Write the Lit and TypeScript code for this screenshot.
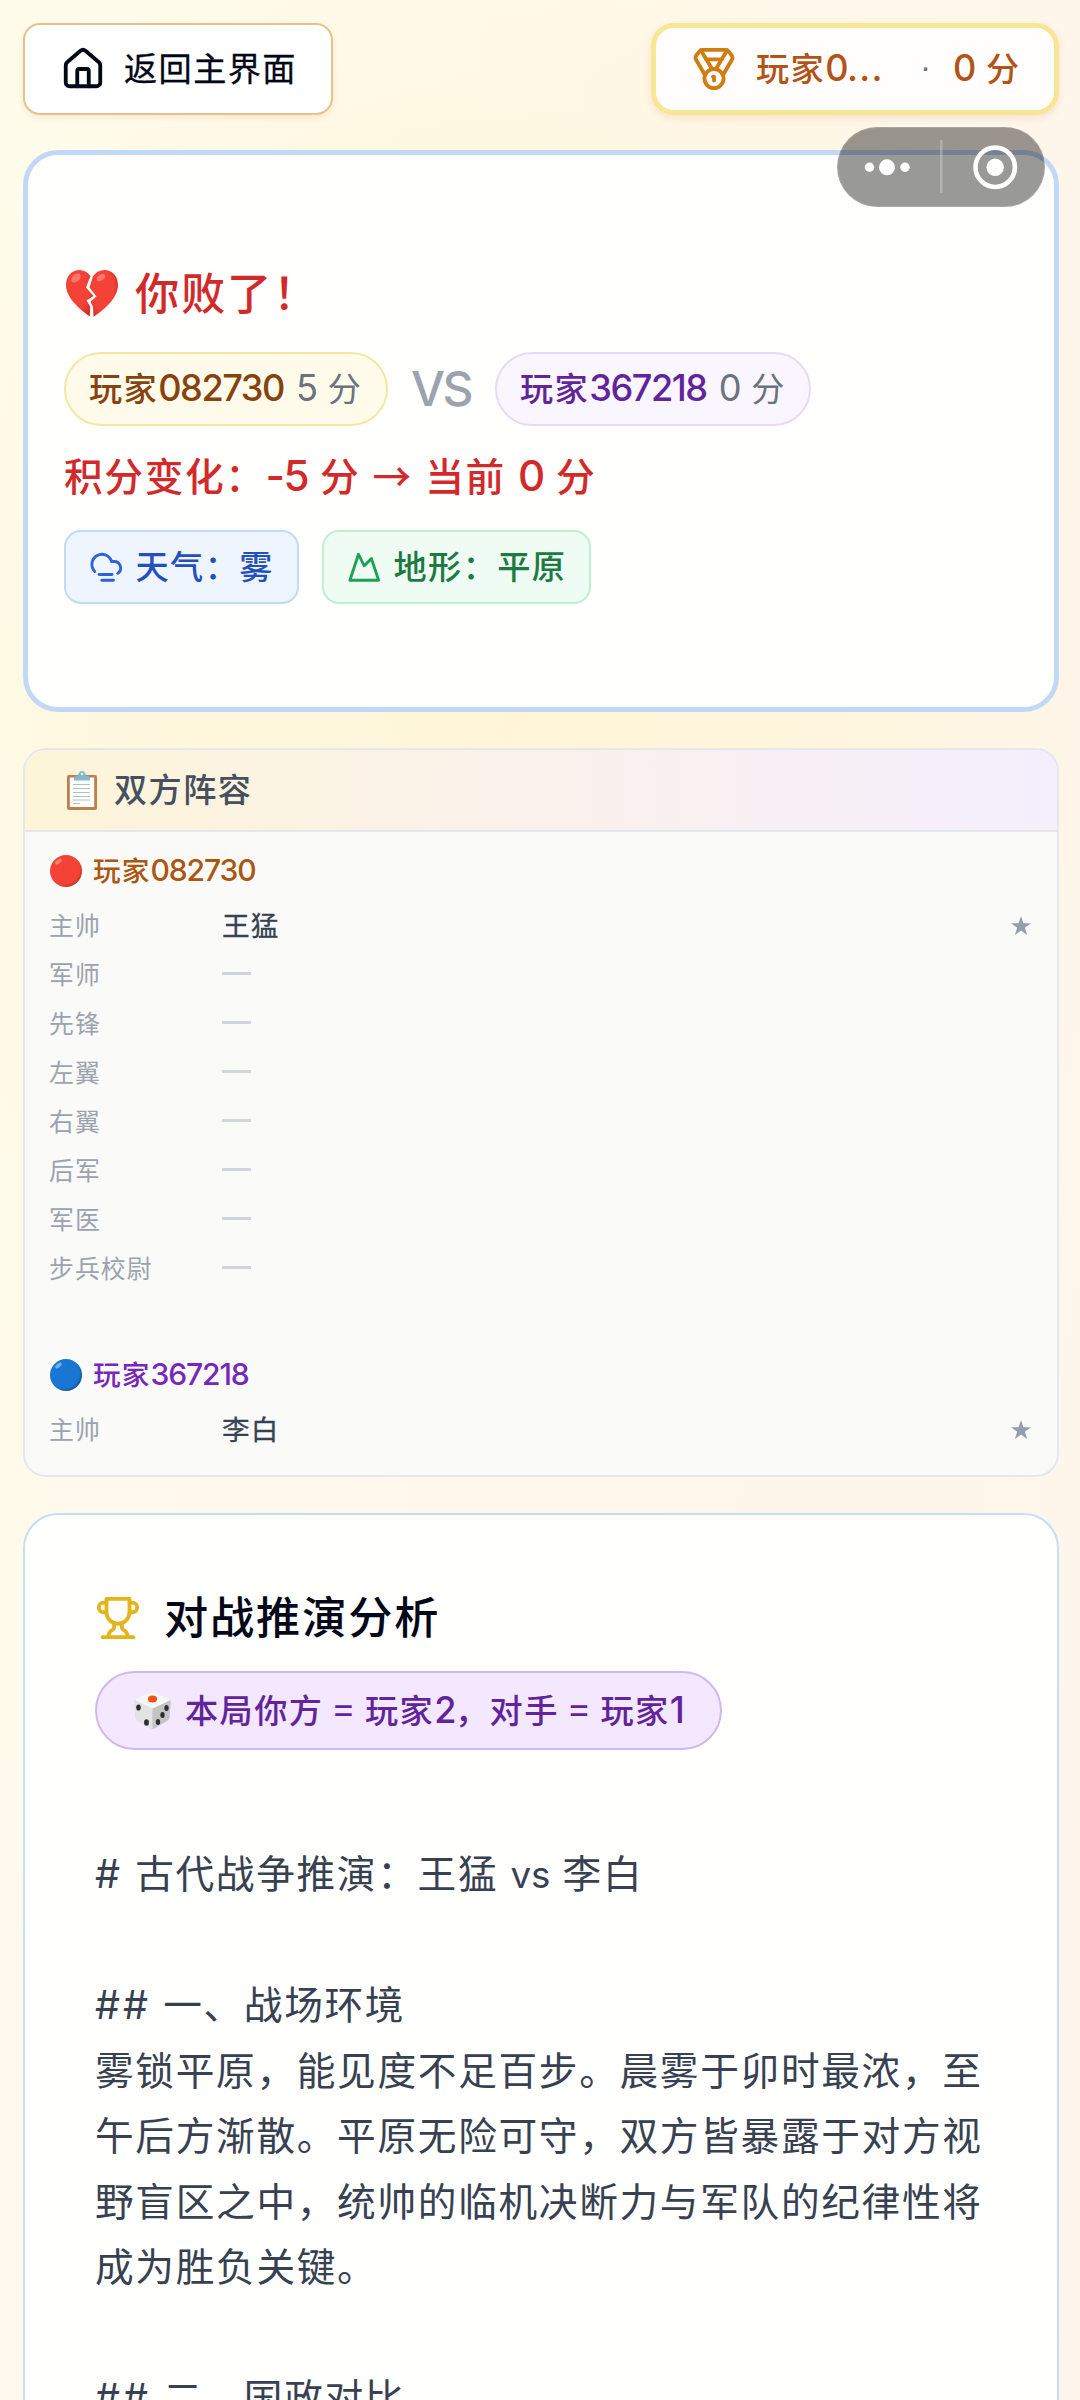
import { LitElement, html, css, svg } from "lit";
import { customElement } from "lit/decorators.js";

const slots = ["主帅", "军师", "先锋", "左翼", "右翼", "后军", "军医", "步兵校尉"];

const lucide = (cls: string, body: unknown) => html`<svg class=${cls} viewBox="0 0 24 24" fill="none"
  stroke="currentColor" stroke-width="2" stroke-linecap="round" stroke-linejoin="round">${body}</svg>`;

const house = svg`<path d="M15 21v-8a1 1 0 0 0-1-1h-4a1 1 0 0 0-1 1v8"/><path d="M3 10a2 2 0 0 1 .709-1.528l7-6a2 2 0 0 1 2.582 0l7 6A2 2 0 0 1 21 10v9a2 2 0 0 1-2 2H5a2 2 0 0 1-2-2z"/>`;
const medal = svg`<path d="M7.21 15 2.66 7.14a2 2 0 0 1 .13-2.2L4.4 2.8A2 2 0 0 1 6 2h12a2 2 0 0 1 1.6.8l1.6 2.14a2 2 0 0 1 .14 2.2L16.79 15"/><path d="M11 12 5.12 2.2"/><path d="m13 12 5.88-9.8"/><path d="M8 7h8"/><circle cx="12" cy="17" r="5"/><path d="M12 18v-2h-.5"/>`;
const cloudFog = svg`<path d="M4 14.899A7 7 0 1 1 15.71 8h1.79a4.5 4.5 0 0 1 2.5 8.242"/><path d="M16 17H7"/><path d="M17 21H9"/>`;
const mountain = svg`<path d="m8 3 4 8 5-5 5 15H2L8 3z"/>`;
const trophy = svg`<path d="M6 9H4.5a2.5 2.5 0 0 1 0-5H6"/><path d="M18 9h1.5a2.5 2.5 0 0 0 0-5H18"/><path d="M4 22h16"/><path d="M10 14.66V17c0 .55-.47.98-.97 1.21C7.85 18.75 7 20.24 7 22"/><path d="M14 14.66V17c0 .55.47.98.97 1.21C16.15 18.75 17 20.24 17 22"/><path d="M18 2H6v7a6 6 0 0 0 12 0V2Z"/>`;

const brokenHeart = html`<svg class="heart" viewBox="0 0 52 47">
  <defs><radialGradient id="hg" cx=".42" cy=".4" r=".7"><stop offset=".6" stop-color="#f44336"/><stop offset="1" stop-color="#c62828"/></radialGradient></defs>
  <path fill="url(#hg)" d="M24.5 6C21.5 2 17.500 0 13.500 0C5.500 0 0 6.500 0 15C0 28 13.500 39 23.800 46.500L24.200 36.500L20.500 30.500L27.500 26L20 17.500Z"/>
  <path fill="url(#hg)" d="M27 6C30 2 34 0 38.500 0C46.500 0 52 6.500 52 15C52 28 38 40 27.500 46.800L27 37L24.500 31.500L30.500 26.500L23.500 17.500Z"/>
  <ellipse cx="10" cy="8" rx="5.500" ry="3.600" fill="#ff8a80" opacity=".75" transform="rotate(-38 10 8)"/>
  <ellipse cx="35" cy="7.500" rx="5" ry="3" fill="#ff8a80" opacity=".75" transform="rotate(-35 35 7.500)"/>
</svg>`;
const clipboard = html`<svg class="clip" viewBox="0 0 30 39">
  <rect x="0" y="4" width="30" height="35" rx="2" fill="#bd7f4c"/><rect x="2.800" y="6.500" width="24.400" height="29.500" fill="#fff"/>
  <path d="M7 9.500V7.500C7 5.500 8.500 5 11 4.500C11.500 1.500 13 0 15 0S18.500 1.500 19 4.500C21.500 5 23 5.500 23 7.500V9.500Z" fill="#82b8c8"/><circle cx="15" cy="3" r="1.200" fill="#fbf2d8"/>
  <g stroke="#b5bfc9" stroke-width="1"><path d="M6 13.500H23"/><path d="M6 17.500H23"/><path d="M6 21.500H23"/><path d="M6 25.500H23"/><path d="M6 29H23"/><path d="M6 32.500H13"/></g>
</svg>`;
const orb = (id: string, main: string, edge: string, shine: string) => html`<svg class="orb" viewBox="0 0 32 32">
  <defs><radialGradient id=${id} cx=".44" cy=".44" r=".57"><stop offset=".84" stop-color=${main}/><stop offset="1" stop-color=${edge}/></radialGradient></defs>
  <circle cx="16" cy="16" r="16" fill="url(#${id})"/><ellipse cx="8.500" cy="6.500" rx="4" ry="1.900" transform="rotate(-40 8.500 6.500)" fill=${shine}/></svg>`;
const dice = html`<svg class="dice" viewBox="0 0 37 37">
  <path d="M18 0Q20 0 22 1L34 6Q37 7.500 36.600 10L35.500 25Q35.300 27.500 33 29L21 36Q18.500 37.400 16 36L4 29Q1.700 27.500 1.500 25L.3 10Q0 7.500 3 6L15 1Q16.500 0 18 0Z" fill="#d9d9d9"/>
  <path d="M18 0Q20 0 22 1L34 6Q37 7.500 34.500 9L19 17L2 9Q0 7.500 3 6L15 1Q16.500 0 18 0Z" fill="#f6f6f6"/>
  <path d="M1 8.500L18.500 16.500V37Q17 36.800 16 36L4 29Q1.700 27.500 1.500 25L.3 10Z" fill="#e3e3e3"/>
  <path d="M36 8.500L18.500 16.500V37Q20 36.800 21 36L33 29Q35.300 27.500 35.500 25L36.600 10Z" fill="#c4c4c4"/>
  <ellipse cx="18.500" cy="7" rx="4.600" ry="3.500" fill="#f4511e"/>
  <g fill="#2f2f2f"><ellipse cx="4.500" cy="15.500" rx="2.300" ry="3.100"/><ellipse cx="12.500" cy="30.500" rx="2.400" ry="3.200"/>
  <ellipse cx="32.500" cy="16" rx="2.200" ry="3"/><ellipse cx="28.500" cy="23" rx="2.200" ry="3"/><ellipse cx="24" cy="30" rx="2.200" ry="3"/></g></svg>`;
const star = html`<svg class="star" viewBox="0 0 20 19"><path fill="currentColor" d="M10 0L12.360 7.250H20L13.820 11.750L16.180 19L10 14.500L3.820 19L6.180 11.750L0 7.250H7.640Z"/></svg>`;

@customElement("app-root")
export class AppRoot extends LitElement {
  static styles = css`
    :host {
      display: block;
      height: 2400px;
      overflow: hidden;
      font-family: "Noto Sans CJK SC", sans-serif;
      font-weight: 500;
      color: #020817;
    }
    * { box-sizing: border-box; }
    svg { display: block; flex: none; }
    .page {
      position: relative;
      display: flex;
      flex-direction: column;
      min-height: 2400px;
      padding: 23px 21px 0 23px;
      background:
        radial-gradient(ellipse 640px 800px at 500px 700px, rgba(254, 243, 199, .5), rgba(254, 243, 199, .4) 50%, rgba(254, 243, 199, 0) 100%),
        linear-gradient(100deg, #fffceb 0%, #fff7ea 60%, #fff5ed 100%);
    }
    .n { font-family: Inter, sans-serif; font-size: 1.09em; line-height: 1; letter-spacing: -.04em; }
    .t12, .t14, .t16, .t10, .t9 { letter-spacing: .042em; word-spacing: .07em; white-space: nowrap; }
    .t9 { font-size: 24.900px; line-height: 45px; margin-top: -3px; }
    .t10 { font-size: 27.650px; line-height: 45px; margin-top: -3px; }
    .t12 { font-size: 33.200px; line-height: 50px; margin-top: -4px; }
    .t14 { font-size: 38.700px; line-height: 60px; word-spacing: .05em; }
    .t16 { font-size: 44.200px; line-height: 66px; margin-top: -6px; }
    .top { display: flex; justify-content: space-between; height: 92px; }
    .back {
      display: flex; align-items: center; gap: 18px; width: 310px; padding: 0 0 0 35px;
      border: 2px solid #ecc08b; border-radius: 17px; background: #fff;
      box-shadow: 0 3px 6px rgba(180, 120, 40, .12);
    }
    .back span, .hero { font-weight: 400; -webkit-text-stroke: .3px currentColor; }
    .i46 { width: 46px; height: 46px; }
    .i34 { width: 34.5px; height: 34.5px; }
    .score {
      display: flex; align-items: center; width: 408px; padding: 0 0 0 35px;
      border: 5.500px solid #f9e694; border-radius: 23px; background: #fffefc;
      color: #b45317;
      box-shadow: 0 3px 8px rgba(180, 100, 40, .14);
    }
    .score .i46 { color: #cf7d13; }
    .who { width: 157px; margin-left: 19px; }
    .dots { letter-spacing: .035em; }
    .sep { display: flex; width: 40px; padding-left: 7px; }
    .sep.t12 { font-family: "Liberation Sans", sans-serif; font-weight: 400; color: #64748b; }
    .capsule {
      position: absolute; left: 836px; top: 126px; width: 210px; height: 82px;
    }
    .result {
      display: flex; flex-direction: column; height: 562px; margin-top: 35px; padding: 104px 0 0 36px;
      border: 5px solid #c1d9f7; border-radius: 35px; background: #fffffe;
    }
    .lost { display: flex; align-items: center; gap: 17px; height: 69px; padding-left: 2px; color: #d22a2a; }
    .heart { width: 52px; height: 47px; }
    .versus { display: flex; align-items: center; gap: 23px; height: 74px; margin-top: 24px; }
    .pill {
      display: flex; align-items: center; gap: 12px; height: 74px; padding: 0 0 0 23px;
      border: 2px solid; border-radius: 37px;
    }
    .pill.a { width: 324px; border-color: #f4e7a2; background: #fefbeb; color: #87430f; }
    .pill.b { width: 316px; border-color: #e7daf9; background: #faf6ff; color: #62249a; }
    .pts { font-weight: 400; color: #6b7280; }
    .vs { width: 61px; font: 500 48px/72px Inter, sans-serif; letter-spacing: -2.500px; color: #9ca3af; }
    .change { height: 60px; margin-top: 18px; color: #d22a2a; }
    .tags { display: flex; gap: 23px; margin-top: 26px; }
    .tag {
      display: flex; align-items: center; gap: 12px; height: 74px; padding-left: 23px;
      border: 2px solid; border-radius: 17px;
    }
    .tag.w { width: 235px; border-color: #c3daf6; background: #eff5ff; color: #2450bd; }
    .tag.w svg { color: #2c63d8; }
    .tag.g { width: 269px; border-color: #bff0d2; background: #effcf4; color: #1d7a43; }
    .tag.g svg { color: #1fa055; }
    .lineup {
      height: 729px; margin-top: 36px; border: 2px solid #e4e8ee; border-radius: 23px;
      background: #fafaf9; overflow: hidden;
    }
    .lhead {
      display: flex; align-items: center; gap: 17px; height: 82px; padding-left: 42px;
      border-bottom: 2px solid #e4e6ea; background: linear-gradient(90deg, #fdf5d8, #faf1ec 50%, #f4eefd);
      color: #46505e;
    }
    .clip { width: 30px; height: 39px; }
    .side { display: flex; flex-direction: column; padding: 14px 26px 0 25px; }
    .side + .side { padding-top: 57px; }
    .name { display: flex; align-items: center; gap: 11px; height: 49px; margin-bottom: 6px; }
    .name.a { color: #ac5610; }
    .name.b { color: #7728ba; }
    .orb { width: 32px; height: 32px; }
    .row { display: flex; align-items: center; height: 49px; }
    .slot { width: 173px; margin-left: -1px; font-weight: 400; color: #9ca3af; }
    .hero { flex: 1; color: #374151; }
    .none { width: 29px; height: 3px; margin-top: -3px; background: #d1d5db; }
    .star { width: 20px; height: 19px; color: #959cab; }
    .analysis {
      flex: none; height: 960px; margin-top: 36px; padding: 68px 0 0 70px;
      border: 2px solid #c7dcf5; border-radius: 35px; background: #fffffe;
    }
    .title { display: flex; align-items: center; gap: 23px; height: 70px; }
    .title svg { color: #e3b41c; }
    .seat {
      display: flex; align-items: center; width: 627px; height: 79px; margin-top: 18px; padding-left: 37px; gap: 14px;
      border: 2px solid #d2b8ef; border-radius: 40px; background: #f3e8ff; color: #62249a;
    }
    .seat .t12 { word-spacing: .055em; }
    .dice { width: 37px; height: 37px; }
    .report {
      width: 890px; margin-top: 89px; font-size: 38.700px; line-height: 65.520px; font-weight: 400;
      letter-spacing: 1.660px; word-spacing: 1.800px; color: #374151; white-space: pre-wrap;
    }
    .h { font-family: Inter, sans-serif; font-size: 1.02em; line-height: 1; letter-spacing: 3px; }
    .report .n { font-size: .95em; letter-spacing: 0; }
  `;

  private side(kind: string, player: string, hero: string, icon: unknown, shown: string[]) {
    return html`<section class="side">
      <div class="name ${kind}">${icon}<span class="t10">玩家<span class="n">${player}</span></span></div>
      ${shown.map((s, i) => html`<div class="row"><span class="slot t9">${s}</span>
        ${i === 0 ? html`<span class="hero t10">${hero}</span>${star}` : html`<span class="none"></span>`}</div>`)}
    </section>`;
  }

  render() {
    const report = html`<span class="h">#</span> 古代战争推演：王猛 <span class="n">vs</span> 李白

<span class="h">##</span> 一、战场环境
雾锁平原，能见度不足百步。晨雾于卯时最浓，至
午后方渐散。平原无险可守，双方皆暴露于对方视
野盲区之中，统帅的临机决断力与军队的纪律性将
成为胜负关键。

<span class="h">##</span> 二、国政对比`;
    return html`<main class="page">
      <header class="top">
        <div class="back">${lucide("i46", house)}<span class="t12">返回主界面</span></div>
        <div class="score">${lucide("i46", medal)}<span class="who t12">玩家<span class="n">0<span class="dots">...</span></span></span><span class="sep t12">·</span><span class="t12"><span class="n">0</span> 分</span></div>
      </header>
      <section class="result">
        <div class="lost">${brokenHeart}<span class="t16">你败了！</span></div>
        <div class="versus">
          <div class="pill a"><span class="t12">玩家<span class="n">082730</span></span><span class="pts t12"><span class="n">5</span> 分</span></div>
          <span class="vs">VS</span>
          <div class="pill b"><span class="t12">玩家<span class="n">367218</span></span><span class="pts t12"><span class="n">0</span> 分</span></div>
        </div>
        <div class="change t14">积分变化：<span class="n">-5</span> 分 → 当前 <span class="n">0</span> 分</div>
        <div class="tags">
          <div class="tag w">${lucide("i34", cloudFog)}<span class="t12">天气：雾</span></div>
          <div class="tag g">${lucide("i34", mountain)}<span class="t12">地形：平原</span></div>
        </div>
      </section>
      <section class="lineup">
        <div class="lhead">${clipboard}<span class="t12">双方阵容</span></div>
        ${this.side("a", "082730", "王猛", orb("ra", "#f44336", "#c33428", "#fa8078"), slots)}
        ${this.side("b", "367218", "李白", orb("rb", "#1976d2", "#11519a", "#6fb0ee"), slots.slice(0, 1))}
      </section>
      <section class="analysis">
        <div class="title">${lucide("i46", trophy)}<span class="t16">对战推演分析</span></div>
        <div class="seat">${dice}<span class="t12">本局你方 = 玩家<span class="n">2</span>，对手 = 玩家<span class="n">1</span></span></div>
        <div class="report">${report}</div>
      </section>
      <svg class="capsule" viewBox="0 0 210 82">
        <rect x="1" y="1" width="208" height="80" rx="40" fill="#000" fill-opacity=".4" stroke="#fff" stroke-opacity=".15" stroke-width="2"/>
        <rect x="104" y="14" width="2.500" height="53" fill="#fff" fill-opacity=".25"/>
        <g fill="#fff"><circle cx="33.500" cy="41.300" r="4.700"/><circle cx="51" cy="41.300" r="8"/><circle cx="69" cy="41.300" r="4.700"/><circle cx="159.200" cy="41.300" r="8.700"/></g>
        <circle cx="159.200" cy="41.300" r="19.700" fill="none" stroke="#fff" stroke-width="4.600"/>
      </svg>
    </main>`;
  }
}
